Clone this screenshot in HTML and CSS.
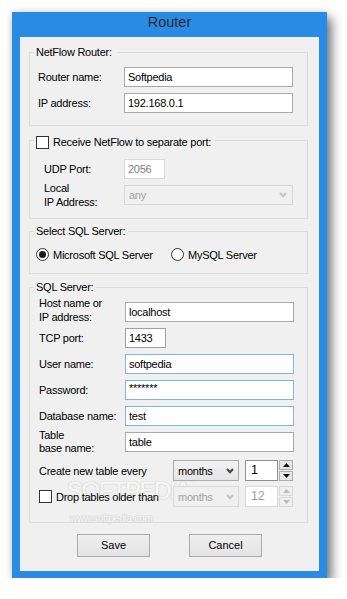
FILE: index.html
```html
<!DOCTYPE html>
<html>
<head>
<meta charset="utf-8">
<title>Router</title>
<link rel="stylesheet" href="styles.css">
</head>
<body>
<div class="window">
  <div class="titlebar">Router</div>
  <div class="client">
    <div class="wm-logo">SOFTPEDIA<span class="tm">™</span></div>
    <div class="wm-url">www.softpedia.com</div>

    <fieldset class="group g1">
      <legend class="legend legend-wide">NetFlow Router:</legend>
      <div class="rows rows-g1">
        <div class="row"><span class="lbl">Router name:</span><span class="field">Softpedia</span></div>
        <div class="row"><span class="lbl">IP address:</span><span class="field">192.168.0.1</span></div>
      </div>
    </fieldset>

    <fieldset class="group g2">
      <legend class="legend legend-check"><span class="chk"></span><span class="legend-text">Receive NetFlow to separate port:</span></legend>
      <div class="rows rows-g2">
        <div class="row"><span class="lbl lbl-g2">UDP Port:</span><span class="field field-short disabled">2056</span></div>
        <div class="row row-tall"><span class="lbl lbl-g2 two-line">Local<br>IP Address:</span><span class="combo combo-wide disabled"><span>any</span><svg class="chev" width="8" height="6" viewBox="0 0 8 6"><polyline points="1,1 4,4.2 7,1" fill="none" stroke="currentColor" stroke-width="2"/></svg></span></div>
      </div>
    </fieldset>

    <fieldset class="group g3">
      <legend class="legend">Select SQL Server:</legend>
      <div class="rows rows-g3">
        <div class="radio-row">
          <span class="radio-item first"><span class="radio checked"></span><span>Microsoft SQL Server</span></span>
          <span class="radio-item"><span class="radio"></span><span>MySQL Server</span></span>
        </div>
      </div>
    </fieldset>

    <fieldset class="group g4">
      <legend class="legend">SQL Server:</legend>
      <div class="rows rows-g4">
        <div class="row row-host"><span class="lbl two-line">Host name or<br>IP address:</span><span class="field field-host">localhost</span></div>
        <div class="row"><span class="lbl">TCP port:</span><span class="field field-short dark">1433</span></div>
        <div class="row"><span class="lbl">User name:</span><span class="field blue">softpedia</span></div>
        <div class="row"><span class="lbl">Password:</span><span class="field blue pwd">*******</span></div>
        <div class="row"><span class="lbl">Database name:</span><span class="field blue">test</span></div>
        <div class="row"><span class="lbl two-line tight">Table<br>base name:</span><span class="field">table</span></div>
        <div class="row row-create">
          <span class="lbl-long">Create new table every</span>
          <span class="combo combo-small"><span>months</span><svg class="chev" width="8" height="6" viewBox="0 0 8 6"><polyline points="1,1 4,4.2 7,1" fill="none" stroke="currentColor" stroke-width="2"/></svg></span>
          <span class="num">1</span>
          <span class="spin"><span class="spin-btn"><svg width="7" height="4" viewBox="0 0 7 4"><polygon points="0,4 3.5,0 7,4" fill="currentColor"/></svg></span><span class="spin-btn"><svg width="7" height="4" viewBox="0 0 7 4"><polygon points="0,0 3.5,4 7,0" fill="currentColor"/></svg></span></span>
        </div>
        <div class="row row-drop">
          <span class="chk"></span>
          <span class="lbl-drop">Drop tables older than</span>
          <span class="combo combo-small disabled"><span>months</span><svg class="chev" width="8" height="6" viewBox="0 0 8 6"><polyline points="1,1 4,4.2 7,1" fill="none" stroke="currentColor" stroke-width="2"/></svg></span>
          <span class="num disabled">12</span>
          <span class="spin disabled"><span class="spin-btn"><svg width="7" height="4" viewBox="0 0 7 4"><polygon points="0,4 3.5,0 7,4" fill="currentColor"/></svg></span><span class="spin-btn"><svg width="7" height="4" viewBox="0 0 7 4"><polygon points="0,0 3.5,4 7,0" fill="currentColor"/></svg></span></span>
        </div>
      </div>
    </fieldset>

    <div class="buttons">
      <span class="btn">Save</span>
      <span class="btn">Cancel</span>
    </div>
  </div>
</div>
</body>
</html>
```
FILE: styles.css
```css
* { box-sizing: border-box; }

body {
  margin: 0;
  background: #ffffff;
  font-family: "Liberation Sans", Arial, sans-serif;
  font-size: 11px;
  letter-spacing: -0.25px;
  color: #000;
}

.window {
  margin: 12px 0 0 12px;
  width: 315px;
  height: 566px;
  background: #2a8be4;
  padding: 0 8px 7px;
  display: flex;
  flex-direction: column;
  box-shadow: 5px 6px 10px rgba(0, 0, 0, 0.5), 0 0 8px rgba(0, 0, 0, 0.12);
}

.titlebar {
  height: 25px;
  padding-top: 2px;
  line-height: 16px;
  text-align: center;
  font-size: 14.5px;
  letter-spacing: 0;
  color: #2b2b2b;
}

.client {
  flex: 1;
  background: #f0f0f0;
  padding: 8px 11px 0 9px;
  position: relative;
  z-index: 0;
}

/* group boxes */
.group {
  margin: 0;
  padding: 0;
  border: 1px solid #dcdcdc;
  min-width: 0;
}
.g2 { margin-top: 7px; }
.g3 { margin-top: 5px; }
.g4 { margin-top: 6px; }

.legend {
  margin-left: 4px;
  padding: 0 3px 0 2px;
  height: 14px;
  line-height: 14px;
}
.legend-wide { padding-right: 6px; }
.legend-check {
  display: flex;
  align-items: flex-start;
  gap: 4px;
}
.legend-check .chk { margin-top: 3px; }
.legend-text { margin-top: 2px; }

.rows { display: flex; flex-direction: column; }
.rows-g1 { padding: 8px 16px 12px 8px; gap: 6px; }
.rows-g2 { padding: 12px 16px 9px 14px; gap: 2px; }
.rows-g3 { padding: 10px 6px 12px 6px; }
.rows-g4 { padding: 2px 15px 15px 9px; }

.row {
  display: flex;
  align-items: center;
  height: 20px;
}
.rows-g4 .row { margin-top: 6px; }
.rows-g4 .row-host { margin-top: 0; height: 26px; align-items: flex-start; }
.row-host .field { margin-top: 6px; }
.row-tall { height: 28px; }

.lbl { width: 86px; flex: none; }
.lbl-g2 { width: 80px; }
.two-line { line-height: 14px; }
.two-line.tight { line-height: 13px; }

/* text fields */
.field {
  width: 169px;
  height: 20px;
  flex: none;
  border: 1px solid #a9a9a9;
  background: #fff;
  padding: 0 3px;
  line-height: 18px;
  white-space: nowrap;
}
.field-short { width: 41px; }
.field.dark { border-color: #a0a0a0; }
.field.blue { border-color: #7eb4ea; }
.field.disabled { border-color: #d9d9d9; color: #808080; }
.pwd { line-height: 14px; font-size: 11px; }

/* combo boxes */
.combo {
  display: flex;
  align-items: center;
  justify-content: space-between;
  height: 20px;
  flex: none;
  border: 1px solid #acacac;
  background: linear-gradient(#f2f2f2, #e5e5e5);
  padding: 0 4px 0 4px;
  color: #000;
}
.combo .chev { color: #444; }
.combo-wide { width: 169px; padding-left: 4px; padding-right: 5px; }
.combo-small { width: 66px; height: 21px; }
.combo.disabled {
  background: #f0f0f0;
  border-color: #d9d9d9;
  color: #a0a0a0;
}
.combo.disabled .chev { color: #c4c4c4; }

/* checkbox / radio */
.chk {
  display: block;
  width: 13px;
  height: 13px;
  flex: none;
  border: 1px solid #333;
  background: #fff;
}
.radio-row { display: flex; align-items: center; height: 13px; }
.radio-item { display: flex; align-items: center; gap: 4px; }
.radio-item.first { width: 135px; }
.radio {
  width: 13px;
  height: 13px;
  flex: none;
  border: 1px solid #333;
  border-radius: 50%;
  background: #fff;
  display: flex;
  align-items: center;
  justify-content: center;
}
.radio.checked::after {
  content: "";
  width: 7px;
  height: 7px;
  border-radius: 50%;
  background: #1a1a1a;
}

/* create / drop rows */
.row-create { margin-top: 8px !important; height: 21px; }
.row-drop { margin-top: 5px !important; height: 21px; }
.lbl-long { width: 134px; flex: none; }
.lbl-drop { width: 117px; flex: none; margin-left: 4px; white-space: nowrap; }

.num {
  width: 33px;
  height: 21px;
  flex: none;
  margin-left: 6px;
  border: 1px solid #8f8f8f;
  background: #fff;
  padding-left: 5px;
  font-size: 12.5px;
  line-height: 19px;
}
.num.disabled { border-color: #d9d9d9; color: #a0a0a0; }

.spin {
  display: flex;
  flex-direction: column;
  gap: 1px;
  margin-left: 1px;
  flex: none;
}
.spin-btn {
  width: 14px;
  height: 10px;
  border: 1px solid #acacac;
  background: #e6e6e6;
  display: flex;
  align-items: center;
  justify-content: center;
  color: #111;
}
.spin.disabled .spin-btn { border-color: #d9d9d9; background: #efefef; color: #bdbdbd; }

/* buttons */
.buttons {
  display: flex;
  gap: 39px;
  margin-top: 11px;
  padding-left: 48px;
}
.btn {
  width: 73px;
  height: 23px;
  border: 1px solid #acacac;
  background: linear-gradient(#efefef, #e3e3e3);
  text-align: center;
  line-height: 21px;
  letter-spacing: 0;
}

/* watermark: painted behind the form content */
.wm-logo {
  position: absolute;
  z-index: -1;
  left: 47px;
  top: 440px;
  font-size: 24px;
  letter-spacing: -1.5px;
  color: #f6f6f6;
  text-shadow: 1px 0 0 #e0e0e0, -1px 0 0 #e0e0e0, 0 1px 0 #e0e0e0, 0 -1px 0 #e6e6e6;
}
.wm-logo .tm { font-size: 7px; vertical-align: top; letter-spacing: 0; }
.wm-url {
  position: absolute;
  z-index: -1;
  left: 50px;
  top: 476px;
  font-size: 10px;
  letter-spacing: -0.2px;
  color: #f6f6f6;
  text-shadow: 1px 0 0 #d8d8d8, -1px 0 0 #dcdcdc, 0 1px 0 #d8d8d8, 0 -1px 0 #e0e0e0;
}
```
